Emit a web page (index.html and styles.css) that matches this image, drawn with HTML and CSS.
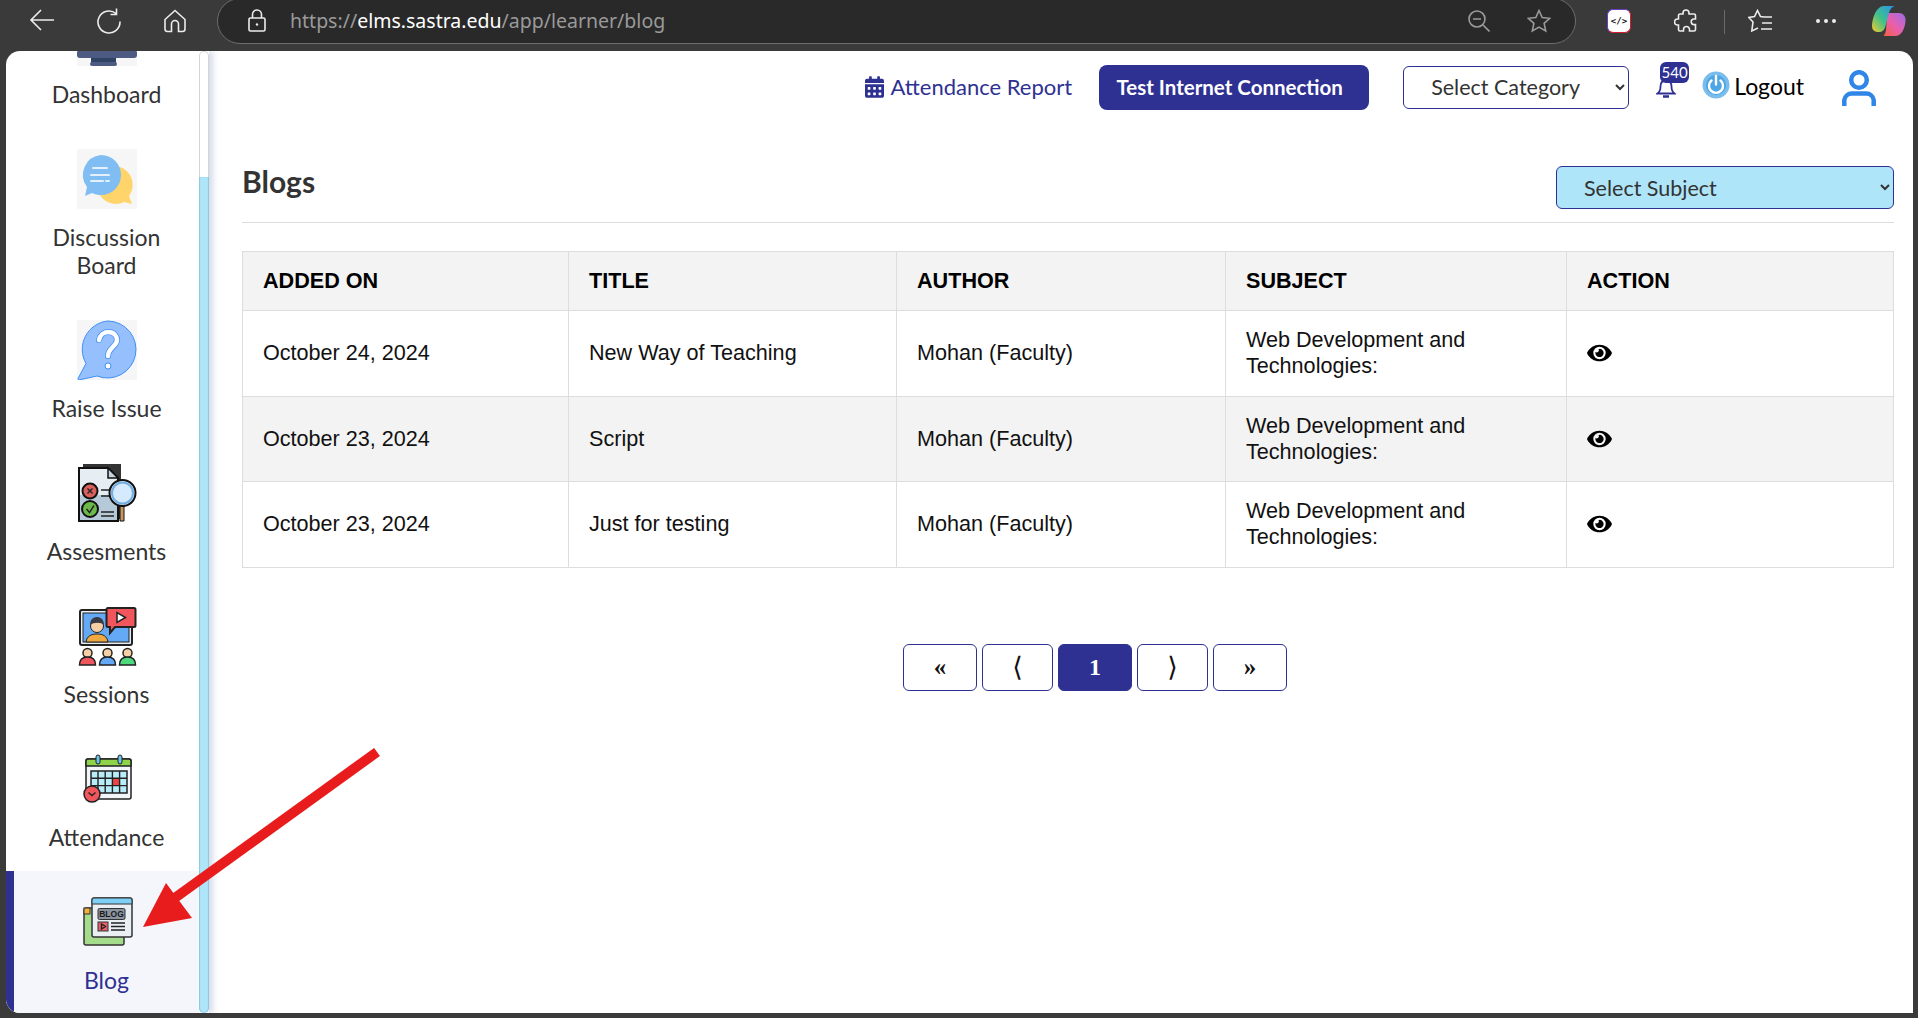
FILE: index.html
```html
<!DOCTYPE html>
<html lang="en">
<head>
    <meta charset="UTF-8">
    <meta name="viewport" content="width=device-width, initial-scale=1.0">
    <title>Blogs</title>
    <link rel="stylesheet" href="styles.css">
</head>
<body>

    <!-- browser chrome -->
    <div class="toolbar">
        <svg class="tb-icon back" viewBox="0 0 26 24"><path d="M25 12H2M12 2 2 12l10 10"/></svg>
        <svg class="tb-icon reload" viewBox="0 0 26 26"><path d="M20 5.5A11 11 0 1 0 24 13.5M20.5 0.5v6h-6"/></svg>
        <svg class="tb-icon home" viewBox="0 0 24 24"><path d="M12 1.5 2 10.5V20a2.5 2.5 0 0 0 2.5 2.5H8.500V15a3.500 3.500 0 0 1 7 0v7.500h4A2.500 2.500 0 0 0 22 20V10.500z"/></svg>

        <div class="address">
            <svg class="tb-icon lock" viewBox="0 0 18 24"><path d="M4.500 9V5.500a4.500 4.500 0 0 1 9 0V9M2.500 9h13A1.500 1.500 0 0 1 17 10.500v10a1.500 1.500 0 0 1-1.500 1.500h-13A1.500 1.500 0 0 1 1 20.500v-10A1.500 1.500 0 0 1 2.500 9z"/><circle class="dot" cx="9" cy="15.500" r="1.200"/></svg>
            <span class="url">https://<b>elms.sastra.edu</b>/app/learner/blog</span>
            <svg class="tb-icon dim zoomout" viewBox="0 0 22 22"><circle cx="9" cy="9" r="8"/><path d="M5 9h8M15 15l6.500 6.500"/></svg>
            <svg class="tb-icon dim star" viewBox="0 0 24 24"><path d="M12 1.500l3.200 7 7.500.8-5.600 5.100 1.600 7.500L12 18.100l-6.700 3.800 1.600-7.500L1.300 9.300l7.500-.8z"/></svg>
        </div>

        <div class="ext-badge">
            <span class="ext-code">&lt;/&gt;</span>
        </div>
        <svg class="tb-icon puzzle" viewBox="0 0 24 24"><path d="M9 4a3 3 0 0 1 6 0v1h5a1.500 1.500 0 0 1 1.500 1.500V10H20a2.800 2.800 0 0 0 0 5.600h1.500v5A1.500 1.500 0 0 1 20 22h-4.500v-1.500a3 3 0 0 0-6 0V22H6a1.500 1.500 0 0 1-1.500-1.500V16H3.500a3 3 0 0 1 0-6h1V6.500A1.500 1.500 0 0 1 6 5h3z"/></svg>
        <span class="tb-sep"></span>
        <svg class="tb-icon favs" viewBox="0 0 24 24"><path d="M16 8 12.500 7.500 9.500 1.500 6.500 7.500 .8 8.500 5 13 3.800 22 10 19M16 8H24M14 14H24M13 20H24"/></svg>
        <div class="dots"><i></i><i></i><i></i></div>
        <svg class="copilot" viewBox="0 0 34 32">
            <defs>
                <linearGradient id="cpA" x1="0" y1="1" x2="1" y2="0"><stop offset="0" stop-color="#f5c92c"/><stop offset=".45" stop-color="#3fc28a"/><stop offset="1" stop-color="#2a8ff0"/></linearGradient>
                <linearGradient id="cpB" x1="0" y1="1" x2="1" y2="0"><stop offset="0" stop-color="#f5603c"/><stop offset=".5" stop-color="#e85fb0"/><stop offset="1" stop-color="#9a6ee8"/></linearGradient>
            </defs>
            <path fill="url(#cpB)" d="M15 8h12c4 0 7 3 6.500 8-.6 7-3.500 15-10.500 15H11c1 0 2-2 3-6z"/>
            <path fill="url(#cpA)" d="M12 1h11c-3 .5-5 3-6 7l-3.500 13c-1 4-3 6-7 6C2 27 0 24.500 0 21 0 14 4 1 12 1z"/>
        </svg>
    </div>

    <div class="page">
        <aside class="sidebar">
            <nav class="nav">
                <a class="nav-item">
                    <svg class="nav-img tinted" viewBox="0 0 60 60">
                        <rect x="0" y="44" width="60" height="8" rx="3" fill="#4d5b82"/>
                        <rect x="14" y="52" width="25" height="5" fill="#2f4464"/>
                        <rect x="13" y="56" width="27" height="4" rx="2" fill="#4d5b82"/>
                    </svg>
                    <span>Dashboard</span>
                </a>
                <a class="nav-item">
                    <svg class="nav-img tinted" viewBox="0 0 60 60">
                        <path fill="#ffd56b" d="M39 17a19 19 0 1 0 0 38c3 0 6-.7 8-2l8 2-3-8a19 19 0 0 0-13-30z"/>
                        <path fill="#7fbdf2" d="M24 6a20 20 0 0 1 0 40c-3 0-6-.6-9-2l-7 3 2-9A20 20 0 0 1 24 6z"/>
                        <path class="bubble-line" d="M16 19h14M14 26h18M14 32h12M29 32h3"/>
                    </svg>
                    <span>Discussion<br>Board</span>
                </a>
                <a class="nav-item">
                    <svg class="nav-img tinted" viewBox="0 0 60 60">
                        <path fill="#96c0fd" stroke="#3f8ef5" d="M31 1a28.500 28.500 0 1 1-11 55l-18 4c-1 0-1.500-1-1-1.500l8-15A28.500 28.500 0 0 1 31 1z"/>
                        <path class="qmark-edge" d="M22 20c1-5 5-8 9-8 6 0 9 4 9 8 0 6-9 8-9 16"/>
                        <path class="qmark" d="M22 20c1-5 5-8 9-8 6 0 9 4 9 8 0 6-9 8-9 16"/>
                        <circle cx="31" cy="46" r="3" fill="#fff" stroke="#3f8ef5"/>
                    </svg>
                    <span>Raise Issue</span>
                </a>
                <a class="nav-item">
                    <svg class="nav-img" viewBox="0 0 60 60">
                        <rect x="6" y="1" width="38" height="55" fill="#333" />
                        <path fill="#e6edf3" stroke="#111" stroke-width="2" d="M2 5h29l10 10v43H2z"/>
                        <path fill="#b5c9d8" d="M3 32h37v25H3z"/>
                        <path fill="#c5d3de" stroke="#111" stroke-width="1.500" d="M31 5v10h10z"/>
                        <circle cx="13" cy="28" r="7.500" fill="#d9605c" stroke="#111" stroke-width="2"/>
                        <path class="ink" d="M10.500 25.500l5 5M15.500 25.500l-5 5"/>
                        <circle cx="13" cy="46" r="8" fill="#6cb84a" stroke="#111" stroke-width="2"/>
                        <path class="ink" d="M9.500 46l3 3.500 4.500-7M24 27h8M24 33h10M24 49h13M24 53h13"/>
                        <path fill="#c99660" stroke="#111" d="M43 40h4v18h-4z"/>
                        <circle cx="45.500" cy="30" r="13" fill="#d5eafc" stroke="#111" stroke-width="2"/>
                        <circle cx="45.500" cy="30" r="10.500" fill="none" stroke="#73aee0" stroke-width="2"/>
                    </svg>
                    <span>Assesments</span>
                </a>
                <a class="nav-item">
                    <svg class="nav-img" viewBox="0 0 60 60">
                        <rect x="3" y="4" width="52" height="35" rx="2" fill="#e8eef2" stroke="#222" stroke-width="2"/>
                        <rect x="6" y="7" width="46" height="29" fill="#64a9f5" stroke="#222"/>
                        <path fill="#f0a840" stroke="#222" d="M9 36c1-6 5-8 11-8s10 2 11 8z"/>
                        <circle cx="20" cy="20" r="6.500" fill="#f6cfa5" stroke="#222"/>
                        <path fill="#3b3b44" d="M13 19c0-6 4-8 7-8s7 2 7 8c-3-3-10-3-14 0z"/>
                        <path fill="#f0565b" stroke="#222" stroke-width="2" d="M31 2h26a1.500 1.500 0 0 1 1.500 1.500v16A1.500 1.500 0 0 1 57 21H38l-5 6v-6h-2a1.500 1.500 0 0 1-1.500-1.500v-16A1.500 1.500 0 0 1 31 2z"/>
                        <path fill="#fff" stroke="#222" stroke-width="1.500" d="M40 6.500v10l8.500-5z"/>
                        <g stroke="#222" stroke-width="1.500">
                            <circle cx="10.500" cy="47" r="4.500" fill="#f6cfa5"/><path fill="#f0565b" d="M2.500 59c0-6 3-8 8-8s8 2 8 8z"/>
                            <circle cx="30.500" cy="47" r="4.500" fill="#f6cfa5"/><path fill="#64a9f5" d="M22.500 59c0-6 3-8 8-8s8 2 8 8z"/>
                            <circle cx="50.500" cy="47" r="4.500" fill="#f6cfa5"/><path fill="#4fd97f" d="M42.500 59c0-6 3-8 8-8s8 2 8 8z"/>
                        </g>
                    </svg>
                    <span>Sessions</span>
                </a>
                <a class="nav-item">
                    <svg class="nav-img" viewBox="0 -4 60 60">
                        <rect x="9" y="6" width="45" height="40" rx="2" fill="#f2f6f8" stroke="#222" stroke-width="1.500"/>
                        <path fill="#8fd34a" stroke="#222" stroke-width="1.500" d="M9 13V8a2 2 0 0 1 2-2h41a2 2 0 0 1 2 2v5z"/>
                        <rect x="19" y="2" width="4" height="9" rx="2" fill="#6ac5e8" stroke="#222"/>
                        <rect x="41" y="2" width="4" height="9" rx="2" fill="#6ac5e8" stroke="#222"/>
                        <rect x="14" y="18" width="36" height="22" fill="#b8ecf9" stroke="#222" stroke-width="1.500"/>
                        <rect x="35.500" y="25.500" width="7" height="7" fill="#ee4444"/>
                        <path class="ink" d="M21 18v22M28.200 18v22M35.400 18v22M42.600 18v22M14 25.300h36M14 32.600h36"/>
                        <circle cx="15" cy="41" r="8" fill="#f0565b" stroke="#222" stroke-width="1.500"/>
                        <path class="ink" d="M11.500 39.500l3.500 3 3.500-3"/>
                    </svg>
                    <span>Attendance</span>
                </a>
                <a class="nav-item active">
                    <svg class="nav-img" viewBox="0 0 60 60">
                        <rect x="7" y="16" width="40" height="37" rx="2" fill="#a5dc8c" stroke="#333" stroke-width="1.500"/>
                        <rect x="7" y="16" width="6" height="6" fill="#f0b040" stroke="#333"/>
                        <rect x="15" y="6" width="40" height="39" rx="2" fill="#e9eff3" stroke="#333" stroke-width="1.500"/>
                        <path fill="#7dcff5" stroke="#333" d="M15 12V8a2 2 0 0 1 2-2h36a2 2 0 0 1 2 2v4z"/>
                        <rect x="21" y="16.500" width="27" height="11" rx="1.500" fill="#8a94a0" stroke="#333"/>
                        <text class="blog-word" x="34.500" y="25.300">BLOG</text>
                        <rect x="21" y="30" width="10" height="9" fill="#e8606a" stroke="#333"/>
                        <path class="ink" d="M34 31h14M34 34.500h14M34 38h14M24.500 32v5l4-2.500z"/>
                    </svg>
                    <span>Blog</span>
                </a>
            </nav>
            <div class="rail">
                <div class="rail-track"></div>
                <div class="rail-thumb"></div>
            </div>
        </aside>

        <main class="main">
            <div class="topbar">
                <a class="report-link">
                    <svg class="cal-icon" viewBox="0 0 448 512"><path d="M0 464c0 26.500 21.500 48 48 48h352c26.500 0 48-21.500 48-48V192H0v272zm320-196c0-6.600 5.400-12 12-12h40c6.600 0 12 5.400 12 12v40c0 6.600-5.400 12-12 12h-40c-6.600 0-12-5.400-12-12v-40zm0 128c0-6.600 5.400-12 12-12h40c6.600 0 12 5.400 12 12v40c0 6.600-5.400 12-12 12h-40c-6.600 0-12-5.400-12-12v-40zM192 268c0-6.600 5.400-12 12-12h40c6.600 0 12 5.400 12 12v40c0 6.600-5.400 12-12 12h-40c-6.600 0-12-5.400-12-12v-40zm0 128c0-6.600 5.400-12 12-12h40c6.600 0 12 5.400 12 12v40c0 6.600-5.400 12-12 12h-40c-6.600 0-12-5.400-12-12v-40zM64 268c0-6.600 5.400-12 12-12h40c6.600 0 12 5.400 12 12v40c0 6.600-5.400 12-12 12H76c-6.600 0-12-5.400-12-12v-40zm0 128c0-6.600 5.400-12 12-12h40c6.600 0 12 5.400 12 12v40c0 6.600-5.400 12-12 12H76c-6.600 0-12-5.400-12-12v-40zM400 64h-48V16c0-8.800-7.200-16-16-16h-32c-8.800 0-16 7.200-16 16v48H160V16c0-8.800-7.200-16-16-16h-32c-8.800 0-16 7.200-16 16v48H48C21.500 64 0 85.500 0 112v48h448v-48c0-26.500-21.500-48-48-48z"/></svg>
                    Attendance Report
                </a>
                <button class="test-btn">Test Internet Connection</button>
                <select class="pick pick-category"><option>Select Category</option></select>
                <div class="bell-wrap">
                    <svg class="bell" viewBox="0 0 20 20"><path d="M10 2.500c-3.500 0-5.500 2.500-5.500 6 0 3-1 5.500-3 7h17c-2-1.500-3-4-3-7 0-3.500-2-6-5.500-6z"/><path class="bell-foot" d="M7 18.500h6"/></svg>
                    <span class="badge">540</span>
                </div>
                <svg class="power" viewBox="0 0 28 28">
                    <circle cx="14" cy="14" r="13.500" fill="#79bdec"/>
                    <circle cx="14" cy="14" r="10" fill="#4ea5e4"/>
                    <path class="power-mark" d="M9.500 9.500a7 7 0 1 0 9 0M14 5v8.500"/>
                </svg>
                <span class="logout">Logout</span>
                <svg class="user" viewBox="0 0 34 36"><circle cx="17" cy="10" r="7.800"/><path d="M2.300 36v-6a7.500 7.500 0 0 1 7.500-6.500h14.400a7.500 7.500 0 0 1 7.500 6.500v6"/></svg>
            </div>

            <div class="page-head">
                <h2>Blogs</h2>
                <select class="pick pick-subject"><option>Select Subject</option></select>
            </div>

            <table class="blog-table">
                <colgroup>
                    <col class="c-date"><col class="c-title"><col class="c-author"><col class="c-subject"><col class="c-action">
                </colgroup>
                <thead>
                    <tr><th>ADDED ON</th><th>TITLE</th><th>AUTHOR</th><th>SUBJECT</th><th>ACTION</th></tr>
                </thead>
                <tbody>
                    <tr>
                        <td>October 24, 2024</td><td>New Way of Teaching</td><td>Mohan (Faculty)</td>
                        <td>Web Development and Technologies:</td>
                        <td><svg class="eye" viewBox="0 0 576 512"><path d="M572.520 241.400C518.290 135.590 407.810 64 288 64S57.680 135.640 3.480 241.410a32.350 32.350 0 0 0 0 29.190C57.710 376.410 168.190 448 288 448s230.320-71.640 284.520-177.410a32.350 32.350 0 0 0 0-29.190zM288 400a144 144 0 1 1 144-144 143.930 143.930 0 0 1-144 144zm0-240a95.310 95.310 0 0 0-25.310 3.790 47.850 47.850 0 0 1-66.900 66.900A95.780 95.780 0 1 0 288 160z"/></svg></td>
                    </tr>
                    <tr>
                        <td>October 23, 2024</td><td>Script</td><td>Mohan (Faculty)</td>
                        <td>Web Development and Technologies:</td>
                        <td><svg class="eye" viewBox="0 0 576 512"><path d="M572.520 241.400C518.290 135.590 407.810 64 288 64S57.680 135.640 3.480 241.410a32.350 32.350 0 0 0 0 29.190C57.710 376.410 168.190 448 288 448s230.320-71.640 284.520-177.410a32.350 32.350 0 0 0 0-29.190zM288 400a144 144 0 1 1 144-144 143.930 143.930 0 0 1-144 144zm0-240a95.310 95.310 0 0 0-25.310 3.790 47.850 47.850 0 0 1-66.900 66.900A95.780 95.780 0 1 0 288 160z"/></svg></td>
                    </tr>
                    <tr>
                        <td>October 23, 2024</td><td>Just for testing</td><td>Mohan (Faculty)</td>
                        <td>Web Development and Technologies:</td>
                        <td><svg class="eye" viewBox="0 0 576 512"><path d="M572.520 241.400C518.290 135.590 407.810 64 288 64S57.680 135.640 3.480 241.410a32.350 32.350 0 0 0 0 29.190C57.710 376.410 168.190 448 288 448s230.320-71.640 284.520-177.410a32.350 32.350 0 0 0 0-29.190zM288 400a144 144 0 1 1 144-144 143.930 143.930 0 0 1-144 144zm0-240a95.310 95.310 0 0 0-25.310 3.790 47.850 47.850 0 0 1-66.900 66.900A95.780 95.780 0 1 0 288 160z"/></svg></td>
                    </tr>
                </tbody>
            </table>

            <div class="pager">
                <button class="pg wide">«</button>
                <button class="pg chev">⟨</button>
                <button class="pg wide current">1</button>
                <button class="pg chev">⟩</button>
                <button class="pg wide">»</button>
            </div>
        </main>
    </div>

    <!-- annotation drawn over the screenshot -->
    <svg class="arrow" viewBox="0 0 1918 1018">
        <path class="arrow-line" d="M377 752 172 900"/>
        <path class="arrow-head" d="M143 927 166 883 192 918z"/>
    </svg>

</body>
</html>
```

FILE: styles.css
```css
html, body{
    margin: 0;
    height: 100%;
    overflow: hidden;
}

body{
    background-color: #3a3a3a;
    font-family: Lato, "Noto Sans", sans-serif;
    color: #333;
    display: flex;
    flex-direction: column;
}

/* browser toolbar */

.toolbar{
    height: 51px;
    flex: none;
    display: flex;
    align-items: flex-start;
    padding-left: 29px;
}

.tb-icon{
    flex: none;
    fill: none;
    stroke: #ececec;
    stroke-width: 1.6;
}

.tb-icon.dim{
    stroke: #9b9b9b;
}

.back{
    width: 26px;
    height: 24px;
    margin-top: 8px;
}

.reload{
    width: 26px;
    height: 26px;
    margin: 8px 0 0 41px;
}

.home{
    width: 24px;
    height: 24px;
    margin: 9px 0 0 41px;
}

.address{
    width: 1359px;
    height: 46px;
    margin: -2px 0 0 30px;
    box-sizing: border-box;
    border: 1px solid #6d6d6d;
    border-radius: 24px;
    background-color: #292929;
    display: flex;
    align-items: flex-start;
    padding-left: 30px;
}

.lock{
    width: 18px;
    height: 24px;
    margin-top: 10px;
}

.lock .dot{
    fill: #ececec;
    stroke: none;
}

.url{
    flex: 1;
    margin: 7px 0 0 24px;
    font-family: "Noto Sans", sans-serif;
    font-size: 19.5px;
    line-height: 30px;
    color: #9a9a9a;
}

.url b{
    font-weight: 400;
    color: #fff;
}

.zoomout{
    width: 22px;
    height: 22px;
    margin-top: 11px;
}

.star{
    width: 24px;
    height: 24px;
    margin: 10px 24px 0 37px;
}

.ext-badge{
    width: 24px;
    height: 24px;
    margin: 9px 0 0 31px;
    flex: none;
    background-color: #fff;
    border-radius: 6px;
    border: 1px solid;
    border-color: #6a3fc8 #d21f2f #d21f2f #6a3fc8;
    box-sizing: border-box;
    display: flex;
    align-items: center;
    justify-content: center;
}

.ext-code{
    font-family: "DejaVu Sans Mono", monospace;
    font-size: 9px;
    font-weight: bold;
    color: #111;
}

.puzzle{
    width: 24px;
    height: 24px;
    margin: 9px 0 0 43px;
}

.tb-sep{
    width: 1px;
    height: 24px;
    margin: 10px 0 0 26px;
    background-color: #6a6a6a;
}

.favs{
    width: 24px;
    height: 24px;
    margin: 9px 0 0 23px;
}

.dots{
    display: flex;
    gap: 4px;
    margin: 19px 0 0 44px;
}

.dots i{
    width: 4px;
    height: 4px;
    border-radius: 50%;
    background-color: #ececec;
}

.copilot{
    width: 34px;
    height: 32px;
    margin: 5px 0 0 36px;
    flex: none;
}

/* page */

.page{
    flex: 1;
    min-height: 0;
    margin: 0 5px 5px 6px;
    background-color: #fff;
    border-radius: 14px 14px 0 14px;
    overflow: hidden;
    display: flex;
}

.sidebar{
    width: 203px;
    flex: none;
    display: flex;
    box-shadow: 4px 0 6px rgba(90, 110, 170, 0.25);
    z-index: 1;
}

.nav{
    width: 193px;
    flex: none;
    margin-top: -65.6px;
}

.nav-item{
    display: flex;
    flex-direction: column;
    align-items: center;
    padding: 21px 0 19.9px;
    border-left: 8px solid transparent;
    font-size: 23px;
    line-height: 28px;
    text-align: center;
    color: #333;
}

.nav-item.active{
    border-left-color: #2e3192;
    background-color: #f4f6fb;
    color: #2e3192;
    padding-bottom: 40px;
}

.nav-img{
    width: 60px;
    height: 60px;
    margin-bottom: 14px;
    flex: none;
}

.nav-img.tinted{
    background-color: #f6f6f6;
}

.bubble-line{
    fill: none;
    stroke: #e4f1fc;
    stroke-width: 2;
    stroke-linecap: round;
}

.qmark, .qmark-edge{
    fill: none;
    stroke-linecap: round;
}

.qmark{
    stroke: #fff;
    stroke-width: 4.5;
}

.qmark-edge{
    stroke: #3f8ef5;
    stroke-width: 6;
}

.ink{
    fill: none;
    stroke: #222;
    stroke-width: 1.4;
}

.blog-word{
    font-family: "Liberation Sans", sans-serif;
    font-size: 8.5px;
    font-weight: bold;
    text-anchor: middle;
    fill: #1a1a1a;
}

.rail{
    width: 10px;
    flex: none;
    display: flex;
    flex-direction: column;
}

.rail-track{
    height: 126px;
    box-sizing: border-box;
    border: 1px solid #d5d5d5;
    border-bottom: none;
    border-radius: 5px 5px 0 0;
    background-color: #fff;
}

.rail-thumb{
    flex: 1;
    background-color: #aee5f9;
    box-shadow: inset -1px 0 1px #8cc8dc, inset 1px 0 1px #8cc8dc;
    border-radius: 0 0 5px 5px;
}

.main{
    flex: 1;
    min-width: 0;
    padding: 0 19px 0 33px;
}

.topbar{
    height: 73px;
    margin-right: 18px;
    display: flex;
    align-items: center;
    justify-content: flex-end;
}

.report-link{
    display: flex;
    align-items: center;
    gap: 7px;
    font-size: 22px;
    color: #2e3192;
    margin: 0 27px 2px 0;
}

.cal-icon{
    width: 19px;
    height: 22px;
    fill: #2e3192;
}

.test-btn{
    width: 270px;
    height: 45px;
    padding: 0 9px 2px 0;
    border: none;
    border-radius: 8px;
    background-color: #2e3192;
    color: #fff;
    font-family: Lato, sans-serif;
    font-size: 20.5px;
    font-weight: bold;
    margin-right: 34px;
}

.pick{
    height: 43px;
    box-sizing: border-box;
    border: 1px solid #2e3192;
    border-radius: 6px;
    padding: 0 4px 1px 23px;
    font-family: Lato, sans-serif;
    font-size: 21.5px;
    color: #333;
    background-color: #fff;
}

.pick-category{
    width: 226px;
    margin-right: 27px;
}

.pick-subject{
    width: 338px;
    padding-bottom: 0;
    background-color: #aee5f9;
}

.bell-wrap{
    position: relative;
    width: 33px;
    height: 45px;
    margin-right: 13px;
}

.bell{
    position: absolute;
    left: 0;
    top: 13px;
    width: 20px;
    height: 20px;
    fill: none;
    stroke: #2e3192;
    stroke-width: 1.8;
}

.bell-foot{
    stroke-width: 2.4;
}

.badge{
    position: absolute;
    left: 4px;
    top: -3px;
    width: 29px;
    height: 21px;
    border-radius: 6px;
    background-color: #2e3192;
    color: #fff;
    font-size: 15px;
    line-height: 21px;
    text-align: center;
}

.power{
    width: 28px;
    height: 28px;
    margin: 0 4px 6px 0;
}

.power-mark{
    fill: none;
    stroke: #fff;
    stroke-width: 2.4;
    stroke-linecap: round;
}

.logout{
    font-size: 23px;
    color: #000;
    margin: 0 38px 4px 0;
}

.user{
    width: 34px;
    height: 36px;
    fill: none;
    stroke: #2f86e8;
    stroke-width: 4.5;
    margin-top: 1px;
}

.page-head{
    margin-top: 42px;
    padding-bottom: 13px;
    border-bottom: 1px solid #ddd;
    display: flex;
    align-items: flex-start;
    justify-content: space-between;
}

.page-head h2{
    margin: 0;
    font-size: 30px;
    line-height: 30px;
    font-weight: bold;
    color: #333;
}

.blog-table{
    width: 100%;
    margin-top: 28px;
    border-collapse: collapse;
    table-layout: fixed;
    font-family: "Liberation Sans", Arial, sans-serif;
    font-size: 21.6px;
    line-height: 26px;
    color: #111;
}

.c-date{ width: 326px; }
.c-title{ width: 328px; }
.c-author{ width: 329px; }
.c-subject{ width: 341px; }

.blog-table th, .blog-table td{
    border: 1px solid #ddd;
    padding: 0 20px;
    text-align: left;
}

.blog-table th{
    height: 58px;
    background-color: #f3f3f3;
    color: #000;
}

.blog-table td{
    height: 84.6px;
}

.blog-table tbody tr:nth-child(2) td{
    background-color: #f3f3f3;
}

.eye{
    display: block;
    width: 25px;
    height: 22px;
}

.pager{
    margin: 76px 0 0 54px;
    display: flex;
    justify-content: center;
    gap: 5px;
}

.pg{
    width: 71px;
    height: 47px;
    padding: 0;
    border: 1px solid #2e3192;
    border-radius: 6px;
    background-color: #fff;
    font-family: "Liberation Serif", "DejaVu Sans", serif;
    font-size: 25px;
    font-weight: bold;
    color: #111;
}

.pg.wide{
    width: 74px;
}

.pg.chev{
    font-weight: normal;
    font-size: 27px;
}

.pg.current{
    background-color: #2e3192;
    color: #fff;
    font-size: 24px;
}

.arrow{
    position: absolute;
    left: 0;
    top: 0;
    width: 1918px;
    height: 1018px;
    z-index: 5;
    pointer-events: none;
}

.arrow-line{
    fill: none;
    stroke: #e81c1c;
    stroke-width: 10;
}

.arrow-head{
    fill: #e81c1c;
}
```
